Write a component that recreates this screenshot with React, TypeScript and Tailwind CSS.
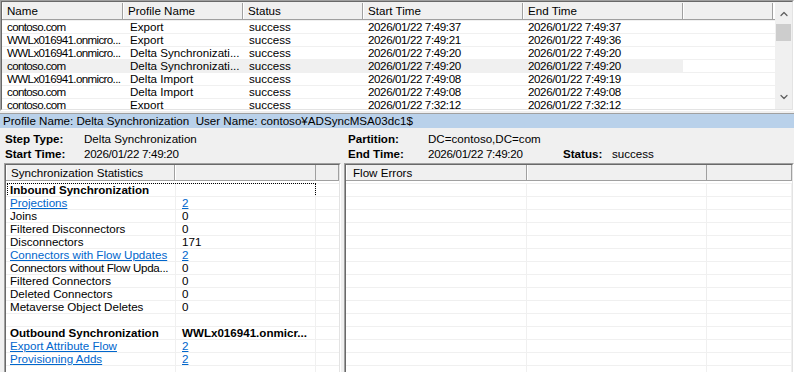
import { ChevronUp, ChevronDown } from "lucide-react";

const runs = [
    { name: "contoso.com", profile: "Export", status: "success", start: "2026/01/22 7:49:37", end: "2026/01/22 7:49:37" },
    { name: "WWLx016941.onmicro...", profile: "Export", status: "success", start: "2026/01/22 7:49:21", end: "2026/01/22 7:49:36" },
    { name: "WWLx016941.onmicro...", profile: "Delta Synchronizati...", status: "success", start: "2026/01/22 7:49:20", end: "2026/01/22 7:49:20" },
    { name: "contoso.com", profile: "Delta Synchronizati...", status: "success", start: "2026/01/22 7:49:20", end: "2026/01/22 7:49:20", selected: true },
    { name: "WWLx016941.onmicro...", profile: "Delta Import", status: "success", start: "2026/01/22 7:49:08", end: "2026/01/22 7:49:19" },
    { name: "contoso.com", profile: "Delta Import", status: "success", start: "2026/01/22 7:49:08", end: "2026/01/22 7:49:08" },
    { name: "contoso.com", profile: "Export", status: "success", start: "2026/01/22 7:32:12", end: "2026/01/22 7:32:12" },
];

type Stat = { label: string; value: string; bold?: boolean; link?: boolean; focus?: boolean; tight?: boolean };

const stats: Stat[] = [
    { label: "Inbound Synchronization", value: "", bold: true, focus: true },
    { label: "Projections", value: "2", link: true },
    { label: "Joins", value: "0" },
    { label: "Filtered Disconnectors", value: "0" },
    { label: "Disconnectors", value: "171" },
    { label: "Connectors with Flow Updates", value: "2", link: true },
    { label: "Connectors without Flow Upda...", value: "0", tight: true },
    { label: "Filtered Connectors", value: "0" },
    { label: "Deleted Connectors", value: "0" },
    { label: "Metaverse Object Deletes", value: "0" },
    { label: "", value: "" },
    { label: "Outbound Synchronization", value: "WWLx016941.onmicr...", bold: true },
    { label: "Export Attribute Flow", value: "2", link: true },
    { label: "Provisioning Adds", value: "2", link: true },
    { label: "", value: "" },
];

export default function App() {
    return (
        <div className="w-[794px] h-[372px] overflow-hidden bg-[#f0f0f0] flex flex-col text-[11.6px] leading-[12px] text-black font-['Liberation_Sans','Noto_Sans_CJK_JP',sans-serif]">
            {/* run history list */}
            <Sunken className="h-[111px] shrink-0">
                <div className="flex h-full">
                    <div className="flex-1 flex flex-col overflow-hidden">
                        <div className="flex h-[18px] shrink-0 border-b border-[#a0a0a0] bg-[#f0f0f0] pt-px">
                            <HeaderCell w="w-[121px]" text="Name" />
                            <HeaderCell w="w-[120px]" text="Profile Name" />
                            <HeaderCell w="w-[120px]" text="Status" />
                            <HeaderCell w="w-[160px]" text="Start Time" />
                            <HeaderCell w="w-[160px]" text="End Time" />
                            <HeaderCell w="w-[90px]" text="" />
                            <div className="flex-1 bg-white" />
                        </div>
                        <div className="h-px bg-white" />
                        <div className="flex-1 bg-white">
                            {runs.map((r, i) => (
                                <div key={i} className="flex h-[13px] border-t border-[#f0f0f0]">
                                    <div className={`flex ${r.selected ? "bg-[#f0f0f0]" : ""}`}>
                                        <Cell w="w-[121px]" pl="pl-[5px] tracking-[-0.65px]">{r.name}</Cell>
                                        <Cell w="w-[120px]" pl="pl-[7px]">{r.profile}</Cell>
                                        <Cell w="w-[120px]" pl="pl-[6px]">{r.status}</Cell>
                                        <Cell w="w-[160px]" pl="pl-[5px] tracking-[-0.4px]">{r.start}</Cell>
                                        <Cell w="w-[160px]" pl="pl-[5px] tracking-[-0.4px]">{r.end}</Cell>
                                    </div>
                                </div>
                            ))}
                        </div>
                    </div>
                    <div className="w-[17px] shrink-0 bg-[#f0f0f0] flex flex-col items-center">
                        <ChevronUp size={12} strokeWidth={2.5} className="text-[#606060] mt-[6px]" />
                        <div className="w-[15px] h-[17px] bg-[#cdcdcd] mt-[4px]" />
                        <div className="flex-1" />
                        <ChevronDown size={12} strokeWidth={2.5} className="text-[#606060] mb-[6px]" />
                    </div>
                </div>
            </Sunken>

            <div className="h-[2px] shrink-0" />

            {/* status bar */}
            <div className="h-[15px] shrink-0 border-t border-[#a0a0a0] bg-[#b9d1ea] pl-[3px] flex items-center whitespace-pre">
                Profile Name: Delta Synchronization  User Name: contoso¥ADSyncMSA03dc1$
            </div>

            {/* step details */}
            <div className="h-[35px] shrink-0 pt-[4px] flex flex-col gap-[1px] whitespace-nowrap">
                <div className="flex h-[14px] items-center">
                    <span className="w-[84px] pl-[5px] font-bold">Step Type:</span>
                    <span className="w-[264px]">Delta Synchronization</span>
                    <span className="w-[80px] font-bold">Partition:</span>
                    <span>DC=contoso,DC=com</span>
                </div>
                <div className="flex h-[14px] items-center">
                    <span className="w-[84px] pl-[5px] font-bold">Start Time:</span>
                    <span className="w-[264px] tracking-[-0.3px]">2026/01/22 7:49:20</span>
                    <span className="w-[80px] font-bold">End Time:</span>
                    <span className="w-[135px] tracking-[-0.3px]">2026/01/22 7:49:20</span>
                    <span className="w-[49px] font-bold">Status:</span>
                    <span>success</span>
                </div>
            </div>

            {/* lower panes */}
            <div className="flex-1 flex pl-[4px] gap-[3px] min-h-0">
                <Sunken className="w-[337px] h-[220px]">
                    <div className="flex h-[16px] border-b border-[#a0a0a0] bg-[#f0f0f0]">
                        <HeaderCell w="w-[169px]" text="Synchronization Statistics" pl="pl-[5px]" />
                        <HeaderCell w="w-[141px]" text="" />
                        <div className="flex-1 border-r border-[#a0a0a0]" />
                    </div>
                    <div className="h-[2px] bg-white" />
                    {stats.map((s, i) => (
                        <div key={i} className="relative flex h-[13px] border-t border-[#f0f0f0]">
                            {s.focus && <div className="absolute left-px top-[-1px] w-[309px] h-[14px] border border-dotted border-black" />}
                            <div className={`w-[170px] pl-[4px] border-r border-[#f0f0f0] overflow-hidden whitespace-nowrap ${s.bold ? "font-bold" : ""} ${s.tight ? "tracking-[-0.3px]" : ""}`}>
                                {s.link ? <a className="text-[#0066cc] underline">{s.label}</a> : s.label}
                            </div>
                            <div className={`w-[140px] pl-[6px] border-r border-[#f0f0f0] overflow-hidden whitespace-nowrap ${s.bold ? "font-bold" : ""}`}>
                                {s.link ? <a className="text-[#0066cc] underline">{s.value}</a> : s.value}
                            </div>
                            <div className="flex-1" />
                        </div>
                    ))}
                </Sunken>

                <Sunken className="flex-1 h-[220px]">
                    <div className="flex h-[16px] border-b border-[#a0a0a0] bg-[#f0f0f0]">
                        <HeaderCell w="w-[181px]" text="Flow Errors" pl="pl-[7px]" />
                        <HeaderCell w="w-[180px]" text="" />
                        <div className="flex-1 border-r border-[#a0a0a0]" />
                    </div>
                    <div className="h-[2px] bg-white" />
                    {Array.from({ length: 15 }).map((_, i) => (
                        <div key={i} className="flex h-[13px] border-t border-[#f0f0f0]">
                            <div className="w-[181px] border-r border-[#f0f0f0]" />
                            <div className="w-[180px] border-r border-[#f0f0f0]" />
                            <div className="flex-1 border-r border-[#f0f0f0]" />
                        </div>
                    ))}
                </Sunken>
            </div>
        </div>
    );
}

function Sunken({ className, children }: { className?: string; children: React.ReactNode }) {
    return (
        <div className={`border border-t-[#a0a0a0] border-l-[#a0a0a0] border-b-white border-r-white ${className ?? ""}`}>
            <div className="h-full overflow-hidden bg-white border border-t-[#696969] border-l-[#696969] border-b-[#e3e3e3] border-r-[#e3e3e3]">
                {children}
            </div>
        </div>
    );
}

function HeaderCell({ w, text, pl = "pl-[5px]" }: { w: string; text: string; pl?: string }) {
    return (
        <div className={`${w} ${pl} shrink-0 flex items-center border-r border-[#a0a0a0] shadow-[inset_1px_0_0_#ffffff] whitespace-nowrap overflow-hidden`}>
            {text}
        </div>
    );
}

function Cell({ w, pl, children }: { w: string; pl: string; children: React.ReactNode }) {
    return (
        <div className={`${w} ${pl} shrink-0 whitespace-nowrap overflow-hidden`}>
            {children}
        </div>
    );
}
